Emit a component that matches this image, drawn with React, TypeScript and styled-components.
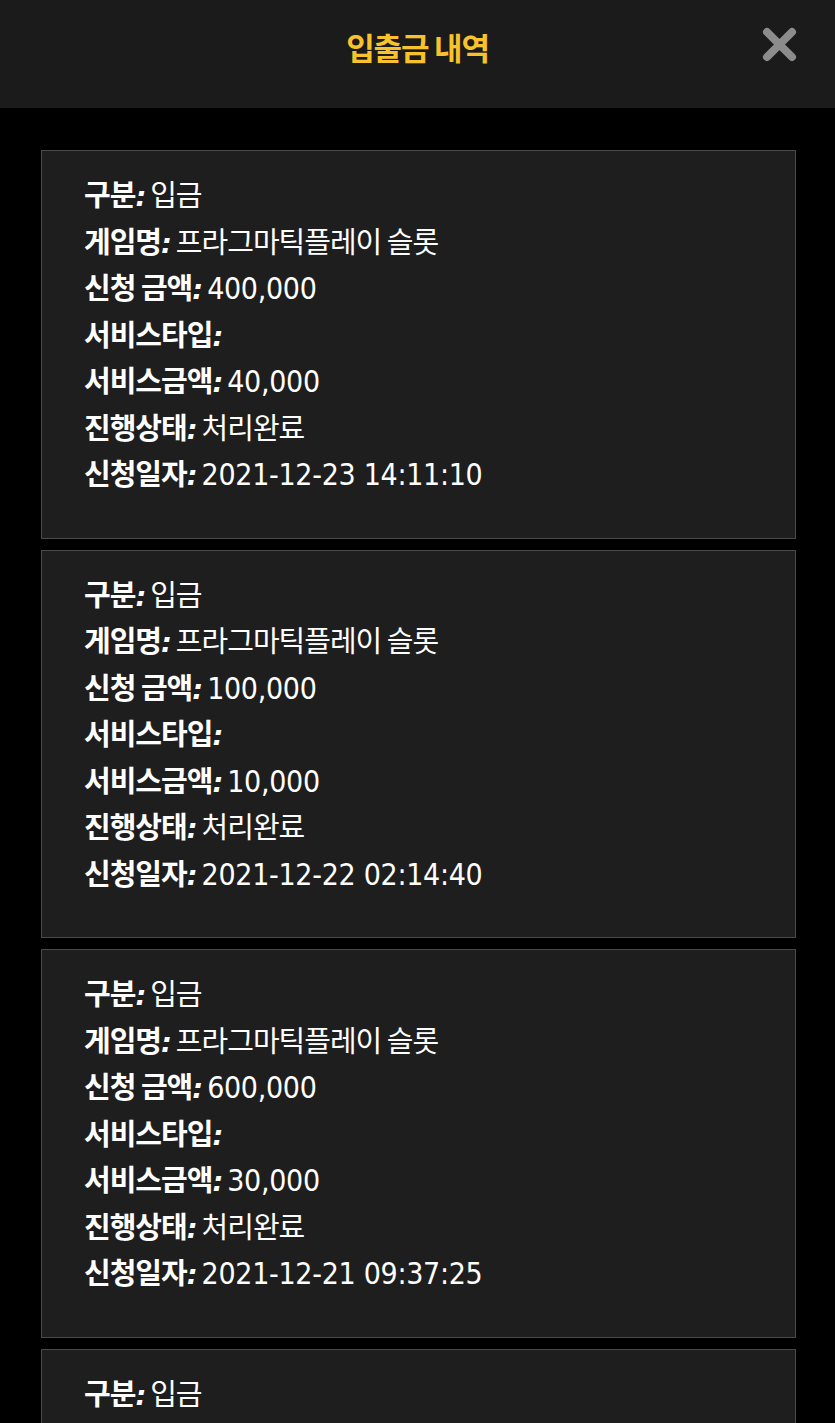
import React from "react";
import styled, { createGlobalStyle } from "styled-components";

const GlobalStyle = createGlobalStyle`
  html, body {
    margin: 0;
    padding: 0;
    background: #000;
  }
  body {
    font-family: "Noto Sans CJK KR", "DejaVu Sans", sans-serif;
    color: #fff;
  }
`;

const Page = styled.div`
  width: 835px;
  min-height: 1423px;
  background: #000;
`;

const Header = styled.header`
  position: relative;
  height: 108px;
  background: #1b1b1b;
  display: flex;
  justify-content: center;
  align-items: flex-start;
  box-sizing: border-box;
  padding-top: 24px;
`;

const Title = styled.h1`
  margin: 0;
  font-family: "Noto Sans CJK KR", sans-serif;
  font-size: 31px;
  line-height: 46px;
  font-weight: 700;
  letter-spacing: -1.2px;
  color: #f7c22c;
`;

const CloseButton = styled.button`
  position: absolute;
  top: 27px;
  right: 38px;
  width: 35px;
  height: 35px;
  padding: 0;
  border: none;
  background: transparent;
  cursor: pointer;
  display: flex;
`;

const List = styled.div`
  display: flex;
  flex-direction: column;
  gap: 11px;
  padding: 42px 39px 0 41px;
`;

const Card = styled.div`
  background: #1e1e1e;
  border: 1px solid #4a4a4a;
  padding: 19px 42px 42px;
`;

const Line = styled.div`
  display: flex;
  align-items: baseline;
  height: 46.5px;
  line-height: 46.5px;
  font-size: 29px;
  letter-spacing: -1px;
  white-space: nowrap;
  overflow: visible;
`;

const Label = styled.span`
  font-family: "Noto Sans CJK KR", sans-serif;
  font-weight: 700;
`;

const Colon = styled.span`
  font-family: "DejaVu Sans", sans-serif;
  font-size: 27px;
  font-style: italic;
  font-weight: 700;
  margin-right: 5px;
`;

const Value = styled.span<{ $numeric?: boolean }>`
  font-weight: 400;
  font-family: ${(p) =>
    p.$numeric
      ? `"DejaVu Sans Condensed", "DejaVu Sans", sans-serif`
      : `"Noto Sans CJK KR", sans-serif`};
  font-size: ${(p) => (p.$numeric ? "30px" : "29px")};
  letter-spacing: ${(p) => (p.$numeric ? "-0.3px" : "-1px")};
`;

type Entry = {
  amount: string;
  service: string;
  date: string;
};

const entries: Entry[] = [
  { amount: "400,000", service: "40,000", date: "2021-12-23 14:11:10" },
  { amount: "100,000", service: "10,000", date: "2021-12-22 02:14:40" },
  { amount: "600,000", service: "30,000", date: "2021-12-21 09:37:25" },
  { amount: "200,000", service: "20,000", date: "2021-12-20 11:05:12" },
];

const Row = ({
  label,
  value,
  numeric,
}: {
  label: string;
  value?: string;
  numeric?: boolean;
}) => (
  <Line>
    <Label>{label}</Label>
    <Colon>:</Colon>
    {value ? <Value $numeric={numeric}>{value}</Value> : null}
  </Line>
);

export default function App() {
  return (
    <Page>
      <GlobalStyle />
      <Header>
        <Title>입출금 내역</Title>
        <CloseButton aria-label="close">
          <svg width="35" height="35" viewBox="0 0 35 35">
            <path
              d="M5 5 L30 30 M30 5 L5 30"
              stroke="#8c8c8c"
              strokeWidth="8"
              strokeLinecap="round"
              fill="none"
            />
          </svg>
        </CloseButton>
      </Header>
      <List>
        {entries.map((e, i) => (
          <Card key={i}>
            <Row label="구분" value="입금" />
            <Row label="게임명" value="프라그마틱플레이 슬롯" />
            <Row label="신청 금액" value={e.amount} numeric />
            <Row label="서비스타입" />
            <Row label="서비스금액" value={e.service} numeric />
            <Row label="진행상태" value="처리완료" />
            <Row label="신청일자" value={e.date} numeric />
          </Card>
        ))}
      </List>
    </Page>
  );
}
